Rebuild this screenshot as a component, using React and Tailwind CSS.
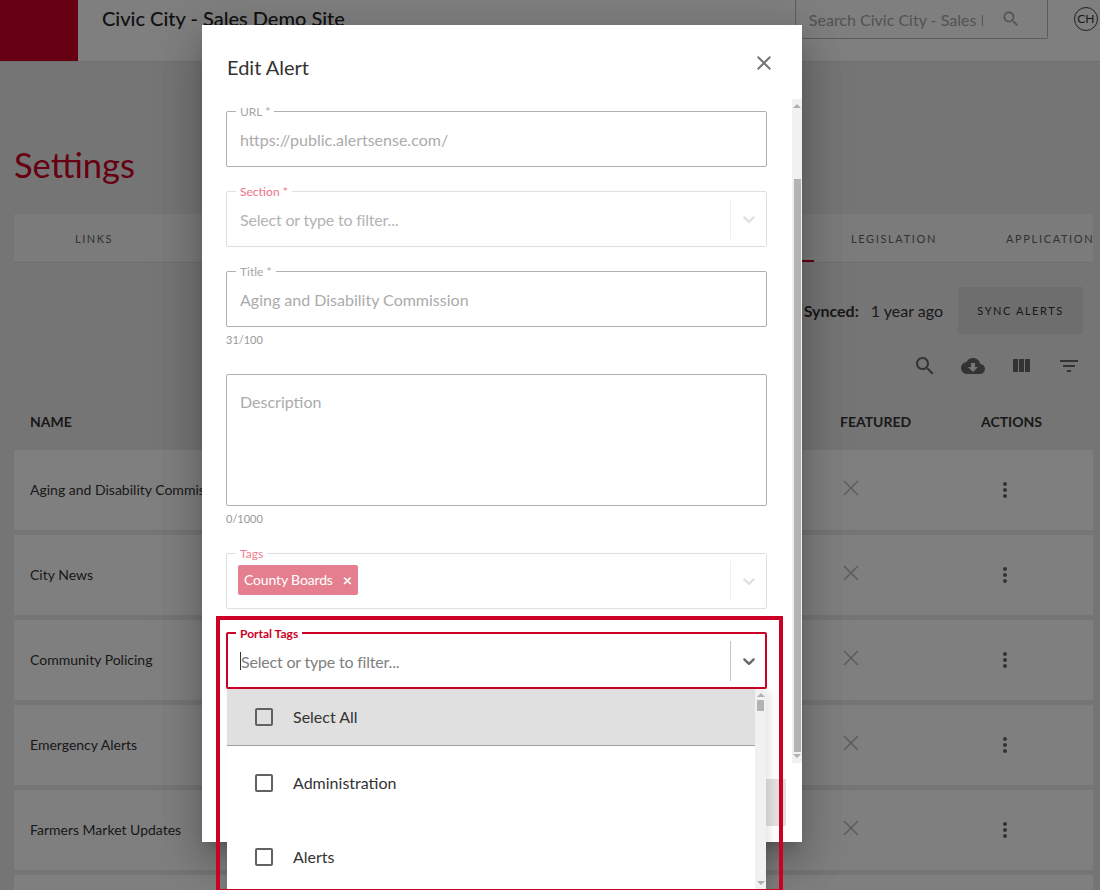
import React from "react";

const rows = [
    "Aging and Disability Commission",
    "City News",
    "Community Policing",
    "Emergency Alerts",
    "Farmers Market Updates",
    "",
];

const Icon = ({ d, size = 24, view = 24, className = "" }) => (
    <svg width={size} height={size} viewBox={`0 0 ${view} ${view}`} fill="currentColor" className={className}>
        <path d={d} />
    </svg>
);

const searchPath = "M15.5 14h-.79l-.28-.27C15.41 12.59 16 11.11 16 9.5 16 5.91 13.09 3 9.5 3S3 5.91 3 9.5 5.91 16 9.5 16c1.61 0 3.09-.59 4.23-1.57l.27.28v.79l5 4.99L20.49 19l-4.99-5zm-6 0C7.01 14 5 11.99 5 9.5S7.01 5 9.5 5 14 7.01 14 9.5 11.99 14 9.5 14z";
const cloudPath = "M19.35 10.04C18.67 6.59 15.64 4 12 4 9.11 4 6.6 5.64 5.35 8.04 2.34 8.36 0 10.91 0 14c0 3.31 2.69 6 6 6h13c2.76 0 5-2.24 5-5 0-2.64-2.05-4.78-4.65-4.96zM17 13l-5 5-5-5h3V9h4v4h3z";
const columnsPath = "M10 18h5V5h-5v13zm-6 0h5V5H4v13zM16 5v13h5V5h-5z";
const filterPath = "M10 18h4v-2h-4v2zM3 6v2h18V6H3zm3 7h12v-2H6v2z";
const morePath = "M12 8c1.1 0 2-.9 2-2s-.9-2-2-2-2 .9-2 2 .9 2 2 2zm0 2c-1.1 0-2 .9-2 2s.9 2 2 2 2-.9 2-2-.9-2-2-2zm0 6c-1.1 0-2 .9-2 2s.9 2 2 2 2-.9 2-2-.9-2-2-2z";
const closePath = "M19 6.41 17.59 5 12 10.59 6.41 5 5 6.41 10.59 12 5 17.59 6.41 19 12 13.41 17.59 19 19 17.59 13.41 12z";
const chevronPath = "M4.516 7.548c0.436-0.446 1.043-0.481 1.576 0l3.908 3.747 3.908-3.747c0.533-0.481 1.141-0.446 1.576 0 0.436 0.445 0.408 1.197 0 1.615-0.406 0.418-4.695 4.502-4.695 4.502-0.217 0.223-0.502 0.335-0.789 0.335s-0.572-0.112-0.789-0.335c0 0-4.287-4.084-4.695-4.502s-0.436-1.17 0-1.615z";

const FieldLabel = ({ children, className }) => (
    <span className={`absolute -top-[7px] left-[9px] bg-white px-[4px] text-[12px] leading-[14px] ${className}`}>
        {children}
    </span>
);

const TextField = ({ label, value, height = "h-[56px]", top = "items-center pt-[2px]" }) => (
    <div className={`relative flex ${top} ${height} w-[541px] rounded-[2px] border border-[#b0b0b0] px-[13px]`}>
        {label && <FieldLabel className="text-[#a6a6a6]">{label}</FieldLabel>}
        <span className="text-[16px] text-[#ababab]">{value}</span>
    </div>
);

const ArrowUp = () => <div className="h-0 w-0 border-x-[4px] border-b-[4px] border-x-transparent border-b-[#b0b0b0]" />;
const ArrowDown = () => <div className="h-0 w-0 border-x-[4px] border-t-[4px] border-x-transparent border-t-[#b0b0b0]" />;

const Option = ({ label, header }) => (
    <div className={`flex items-center pl-[28px] text-[16px] text-[#333] ${header ? "h-[57px] border-b border-[#9e9e9e] bg-[#e0e0e0]" : "h-[74px] bg-white"}`}>
        <div className="h-[18px] w-[18px] rounded-[2px] border-2 border-[#616161]" />
        <span className="ml-[20px]">{label}</span>
    </div>
);

const App = () => {
    return (
        <div className="relative h-[890px] w-[1100px] overflow-hidden bg-[#ebebeb] font-[family-name:Lato,sans-serif]">

            {/* Header */}
            <header className="flex h-[62px] items-start border-b border-[#dedede] bg-white">
                <div className="h-[61px] w-[78px] bg-[#cc0024]" />
                <div className="ml-[24px] text-[20px] font-medium leading-[36px] text-[#222]">
                    Civic City - Sales Demo Site
                </div>
                <div className="ml-[450px] flex h-[39px] w-[253px] items-center rounded-br-[2px] border-x border-b border-[#b8b8b8] pl-[13px] pt-[2px] text-[#a6a6a6]">
                    <div className="w-[174px] overflow-hidden whitespace-nowrap text-[16px]">Search Civic City - Sales Demo Site</div>
                    <Icon d={searchPath} size={20} className="ml-[18px] -mt-[2px]" />
                </div>
                <div className="ml-[26px] mt-[7px] flex h-[24px] w-[24px] items-center justify-center rounded-full border border-[#444] text-[12px] text-[#333]">
                    CH
                </div>
            </header>

            {/* Page */}
            <main className="mx-[14px] w-[1079px]">
                <h1 className="mt-[81px] h-[44px] text-[34.5px] font-normal leading-[44px] text-[#cc0024]">Settings</h1>

                <div className="mt-[27px] flex h-[49px] overflow-hidden border-b border-[#dcdcdc] bg-[#f6f6f6] pt-[2px]">
                    <div className="flex w-[160px] shrink-0 items-center justify-center text-[11px] tracking-[0.14em] text-[#666]">LINKS</div>
                    <div className="w-[480px] shrink-0" />
                    <div className="w-[160px] shrink-0 self-end border-b-2 border-[#cc0024]" />
                    <div className="flex w-[160px] shrink-0 items-center justify-center text-[11px] tracking-[0.15em] text-[#666]">LEGISLATION</div>
                    <div className="flex w-[160px] shrink-0 items-center justify-center whitespace-nowrap text-[11px] tracking-[0.15em] text-[#666]">APPLICATIONS</div>
                </div>

                <div className="mr-[10px] mt-[24px] flex items-center justify-end text-[16px] text-[#333]">
                    <span className="font-bold">Synced:</span>
                    <span className="ml-[12px]">1 year ago</span>
                    <div className="ml-[15px] flex h-[47px] w-[125px] items-center justify-center bg-[#dcdcdc] pt-[1px] text-[11px] tracking-[0.14em] text-[#333]">
                        SYNC ALERTS
                    </div>
                </div>

                <div className="mt-[20px] flex justify-end text-[#666]">
                    {[searchPath, cloudPath, columnsPath, filterPath].map((d) => (
                        <div key={d} className="flex w-[48px] justify-center">
                            <Icon d={d} />
                        </div>
                    ))}
                </div>

                <div className="mt-[31px] grid h-[24px] grid-cols-[826px_141px_112px] items-center text-[14px] font-bold text-[#333]">
                    <span className="pl-[16px]">NAME</span>
                    <span>FEATURED</span>
                    <span>ACTIONS</span>
                </div>

                <div className="mt-[17px] flex flex-col gap-[5px]">
                    {rows.map((name) => (
                        <div key={name} className="grid h-[80px] grid-cols-[826px_141px_112px] items-center bg-white text-[14px] text-[#333]">
                            <span className="pb-[2px] pl-[16px]">{name}</span>
                            {/* thin cross, lighter than the modal's close icon */}
                            <svg width="16" height="16" viewBox="0 0 16 16" className="-mt-[4px] ml-[3px] text-[#b8b8b8]">
                                <path d="M1 1l14 14M15 1L1 15" stroke="currentColor" strokeWidth="1.5" fill="none" />
                            </svg>
                            <Icon d={morePath} className="ml-[12px] text-[#666]" />
                        </div>
                    ))}
                </div>
            </main>

            {/* Backdrop */}
            <div className="absolute inset-0 bg-black/50" />

            {/* Edit alert modal */}
            <div className="absolute left-[202px] top-[25px] h-[817px] w-[600px] bg-white shadow-[0_11px_15px_-7px_rgba(0,0,0,0.2),0_24px_38px_3px_rgba(0,0,0,0.14),0_9px_46px_8px_rgba(0,0,0,0.12)]">
                <div className="flex h-[74px] items-start justify-between pl-[25px] pr-[26px]">
                    <h2 className="mt-[28px] text-[20px] font-normal leading-[28px] text-[#333]">Edit Alert</h2>
                    <Icon d={closePath} className="mt-[26px] text-[#757575]" />
                </div>

                <div className="flex h-[664px]">
                    <div className="w-[590px] pl-[24px] pt-[12px]">
                        <TextField label="URL *" value="https://public.alertsense.com/" />

                        <div className="relative mt-[24px] flex h-[56px] w-[541px] items-center rounded-[2px] border border-[#e0e0e0] pl-[13px]">
                            <FieldLabel className="font-medium text-[#ee7b8e]">Section *</FieldLabel>
                            <span className="flex-1 pt-[2px] text-[16px] tracking-[-0.2px] text-[#b3b3b3]">Select or type to filter...</span>
                            <div className="h-[40px] w-px bg-[#eeeeee]" />
                            <Icon d={chevronPath} size={20} view={20} className="ml-[8px] mr-[7px] text-[#e0e0e0]" />
                        </div>

                        <div className="mt-[24px]">
                            <TextField label="Title *" value="Aging and Disability Commission" />
                        </div>
                        <div className="h-[47px] pt-[6px] text-[11px] leading-[14px] text-[#999]">31/100</div>

                        <TextField label="" value="Description" height="h-[132px]" top="items-start pt-[15px]" />
                        <div className="h-[47px] pt-[6px] text-[11px] leading-[14px] text-[#999]">0/1000</div>

                        <div className="relative flex h-[56px] w-[541px] items-center rounded-[2px] border border-[#e0e0e0] pl-[11px]">
                            <FieldLabel className="text-[#ee7b8e]">Tags</FieldLabel>
                            <div className="flex flex-1 pb-[2px]">
                                <div className="flex h-[30px] w-[120px] items-center rounded-[2px] bg-[#e57f90] pb-[2px] pl-[6px] text-[14px] tracking-[-0.15px] text-white">
                                    <span>County Boards</span>
                                    <span className="ml-[10px] pt-[2px] text-[16px] font-bold leading-none">×</span>
                                </div>
                            </div>
                            <div className="h-[40px] w-px bg-[#eeeeee]" />
                            <Icon d={chevronPath} size={20} view={20} className="ml-[8px] mr-[7px] text-[#e0e0e0]" />
                        </div>

                        {/* Portal tags, open */}
                        <div className="relative mt-[23px] w-[541px]">
                            <div className="flex h-[57px] items-center rounded-[2px] border-2 border-[#cc0024] pl-[12px]">
                                <span className="absolute -top-[5px] left-[10px] bg-white px-[4px] text-[12px] font-bold leading-[14px] text-[#cc0024]">Portal Tags</span>
                                <div className="h-[18px] w-px bg-[#333]" />
                                <span className="flex-1 pt-[2px] text-[16px] tracking-[-0.2px] text-[#808080]">Select or type to filter...</span>
                                <div className="h-[40px] w-px bg-[#c4c4c4]" />
                                <Icon d={chevronPath} size={20} view={20} className="ml-[8px] mr-[6px] text-[#666]" />
                            </div>

                            <div className="absolute left-px top-[57px] flex h-[200px] w-[539px] overflow-hidden shadow-[4px_2px_8px_rgba(0,0,0,0.1)]">
                                <div className="w-[528px]">
                                    <Option label="Select All" header />
                                    <Option label="Administration" />
                                    <Option label="Alerts" />
                                </div>
                                <div className="flex w-[11px] flex-col items-center bg-[#f1f1f1]">
                                    <div className="mt-[4px]"><ArrowUp /></div>
                                    <div className="mt-[3px] h-[11px] w-[7px] bg-[#b3b3b3]" />
                                    <div className="mt-[170px]"><ArrowDown /></div>
                                </div>
                            </div>
                        </div>
                    </div>

                    <div className="flex w-[10px] flex-col items-center bg-[#f1f1f1]">
                        <div className="mt-[5px]"><ArrowUp /></div>
                        <div className="mt-[71px] h-[573px] w-[7px] bg-[#b3b3b3]" />
                        <div className="mt-[2px]"><ArrowDown /></div>
                    </div>
                </div>

                <div className="flex justify-end pr-[16px] pt-[16px]">
                    <div className="h-[47px] w-[100px] bg-[#e0e0e0]" />
                </div>
            </div>

            {/* Annotation box */}
            <div className="pointer-events-none absolute left-[216px] top-[616px] h-[277px] w-[567px] border-4 border-[#cc0024]" />
        </div>
    );
};

export default App;
